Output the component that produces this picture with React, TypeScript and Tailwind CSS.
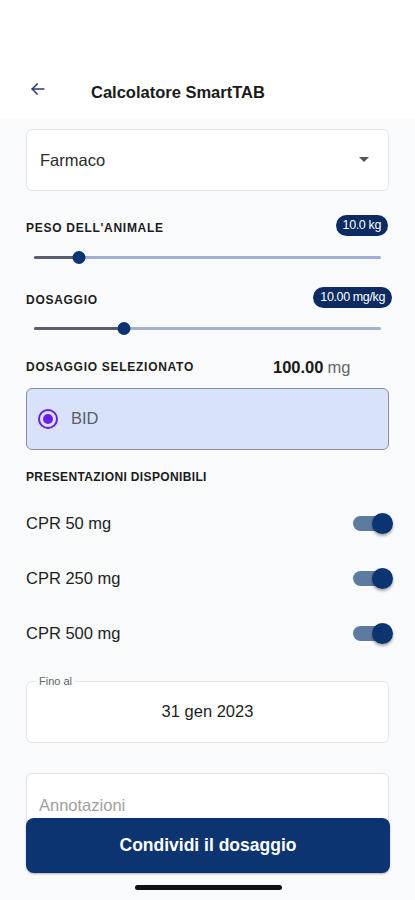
import React from "react";

function Slider({ pct }: { pct: number }) {
  return (
    <div className="relative h-[14px] mx-2 flex items-center">
      <div className="h-[3px] w-full bg-[#a3afd3] rounded-full" />
      <div className="absolute left-0 h-[3px] bg-[#5a5f6e] rounded-full" style={{ width: `${pct}%` }} />
      <div
        className="absolute w-[13px] h-[13px] rounded-full bg-[#0b3470] -translate-x-1/2"
        style={{ left: `${pct}%` }}
      />
    </div>
  );
}

function Toggle() {
  return (
    <div className="relative w-[40px] h-[22px] flex items-center">
      <div className="w-[32px] h-[15px] rounded-full bg-[#5d7ba1]" />
      <div className="absolute right-0 w-[21px] h-[21px] rounded-full bg-[#0b3470] shadow-[0_2px_3px_rgba(0,0,0,0.35)]" />
    </div>
  );
}

export default function App() {
  return (
    <div className="relative w-[415px] h-[900px] overflow-hidden bg-[#f9fafb] font-['Liberation_Sans',Arial,sans-serif] text-[#1c1c1c]">
      <div className="bg-white h-[118px] flex items-end pb-[11px]">
        <div className="flex items-center pl-[28px] h-[30px]">
          <svg className="-mt-[6px]" width="20" height="20" viewBox="0 0 24 24" fill="none" stroke="#2b3a7a" strokeWidth="2" strokeLinecap="round" strokeLinejoin="round">
            <path d="M19 12H5" />
            <path d="M11 6l-6 6 6 6" />
          </svg>
          <span className="ml-[43px] text-[16.5px] font-bold text-[#1a1a1a]">Calcolatore SmartTAB</span>
        </div>
      </div>
      <div className="px-[26px] pt-[11px] flex flex-col">
        <div className="h-[62px] border border-[#e2e4e8] rounded-[6px] bg-white flex items-center justify-between pl-[13px] pr-[19px]">
          <span className="text-[16.5px] text-[#2a2a2a]">Farmaco</span>
          <svg width="10" height="6" viewBox="0 0 10 6"><path d="M0 0h10L5 5z" fill="#555" /></svg>
        </div>

        <div className="mt-[22px] flex items-center justify-between">
          <span className="text-[12px] font-bold tracking-[0.06em] text-[#1c1c1c] mt-[6px]">PESO DELL'ANIMALE</span>
          <span className="bg-[#0b2b62] text-white text-[12.5px] leading-[21px] px-[7px] rounded-full mr-[1px] tracking-[-0.03em]">10.0 kg</span>
        </div>
        <div className="mt-[13px]">
          <Slider pct={13} />
        </div>

        <div className="mt-[21px] flex items-center justify-between">
          <span className="text-[12px] font-bold tracking-[0.06em] text-[#1c1c1c] mt-[6px]">DOSAGGIO</span>
          <span className="bg-[#0b2b62] text-white text-[12.5px] leading-[21px] px-[7px] rounded-full -mr-[3px] tracking-[-0.03em]">10.00 mg/kg</span>
        </div>
        <div className="mt-[12px]">
          <Slider pct={26} />
        </div>

        <div className="mt-[20px] flex items-center">
          <span className="text-[12px] font-bold tracking-[0.06em] text-[#1c1c1c] w-[247px]">DOSAGGIO SELEZIONATO</span>
          <span className="text-[16.5px] font-bold text-[#1a1a1a]">100.00</span>
          <span className="text-[16.5px] text-[#666] ml-[4px]">mg</span>
        </div>

        <div className="mt-[8px] h-[62px] border border-[#8a8f99] rounded-[6px] bg-[#d8e3fb] flex items-center pl-[11px]">
          <div className="w-[20px] h-[20px] rounded-full border-2 border-[#6b1ee6] flex items-center justify-center">
            <div className="w-[10px] h-[10px] rounded-full bg-[#6b1ee6]" />
          </div>
          <span className="ml-[13px] text-[16.5px] text-[#5b5e66]">BID</span>
        </div>

        <div className="mt-[18px] text-[12px] font-bold tracking-[0.03em] text-[#1c1c1c]">PRESENTAZIONI DISPONIBILI</div>

        <div className="mt-[27px] flex flex-col gap-[33px]">
          {["CPR 50 mg", "CPR 250 mg", "CPR 500 mg"].map((t) => (
            <div key={t} className="flex items-center justify-between h-[22px]">
              <span className="text-[16.5px] text-[#1e1e1e]">{t}</span>
              <div className="-mr-[4px]"><Toggle /></div>
            </div>
          ))}
        </div>

        <div className="mt-[36px] relative h-[62px] border border-[#e2e4e8] rounded-[6px] bg-white flex items-center justify-center">
          <span className="absolute -top-[7px] left-[9px] bg-[#f9fafb] px-[3px] text-[11px] leading-[12px] text-[#666]">Fino al</span>
          <span className="text-[16.5px] text-[#1e1e1e]">31 gen 2023</span>
        </div>

        <div className="mt-[30px] h-[62px] border border-[#e2e4e8] rounded-[6px] bg-white flex items-start pl-[12px] pt-[19px]">
          <span className="text-[16.5px] text-[#a0a0a0]">Annotazioni</span>
        </div>
      </div>

      <div className="absolute left-[26px] right-[25px] top-[818px] h-[55px] rounded-[8px] bg-[#0b3470] flex items-center justify-center shadow-[0_1px_2px_rgba(0,0,0,0.3)]">
        <span className="text-white text-[17.5px] font-bold">Condividi il dosaggio</span>
      </div>
      <div className="absolute left-[135px] w-[147px] top-[885px] h-[5px] rounded-full bg-[#111]" />
    </div>
  );
}
